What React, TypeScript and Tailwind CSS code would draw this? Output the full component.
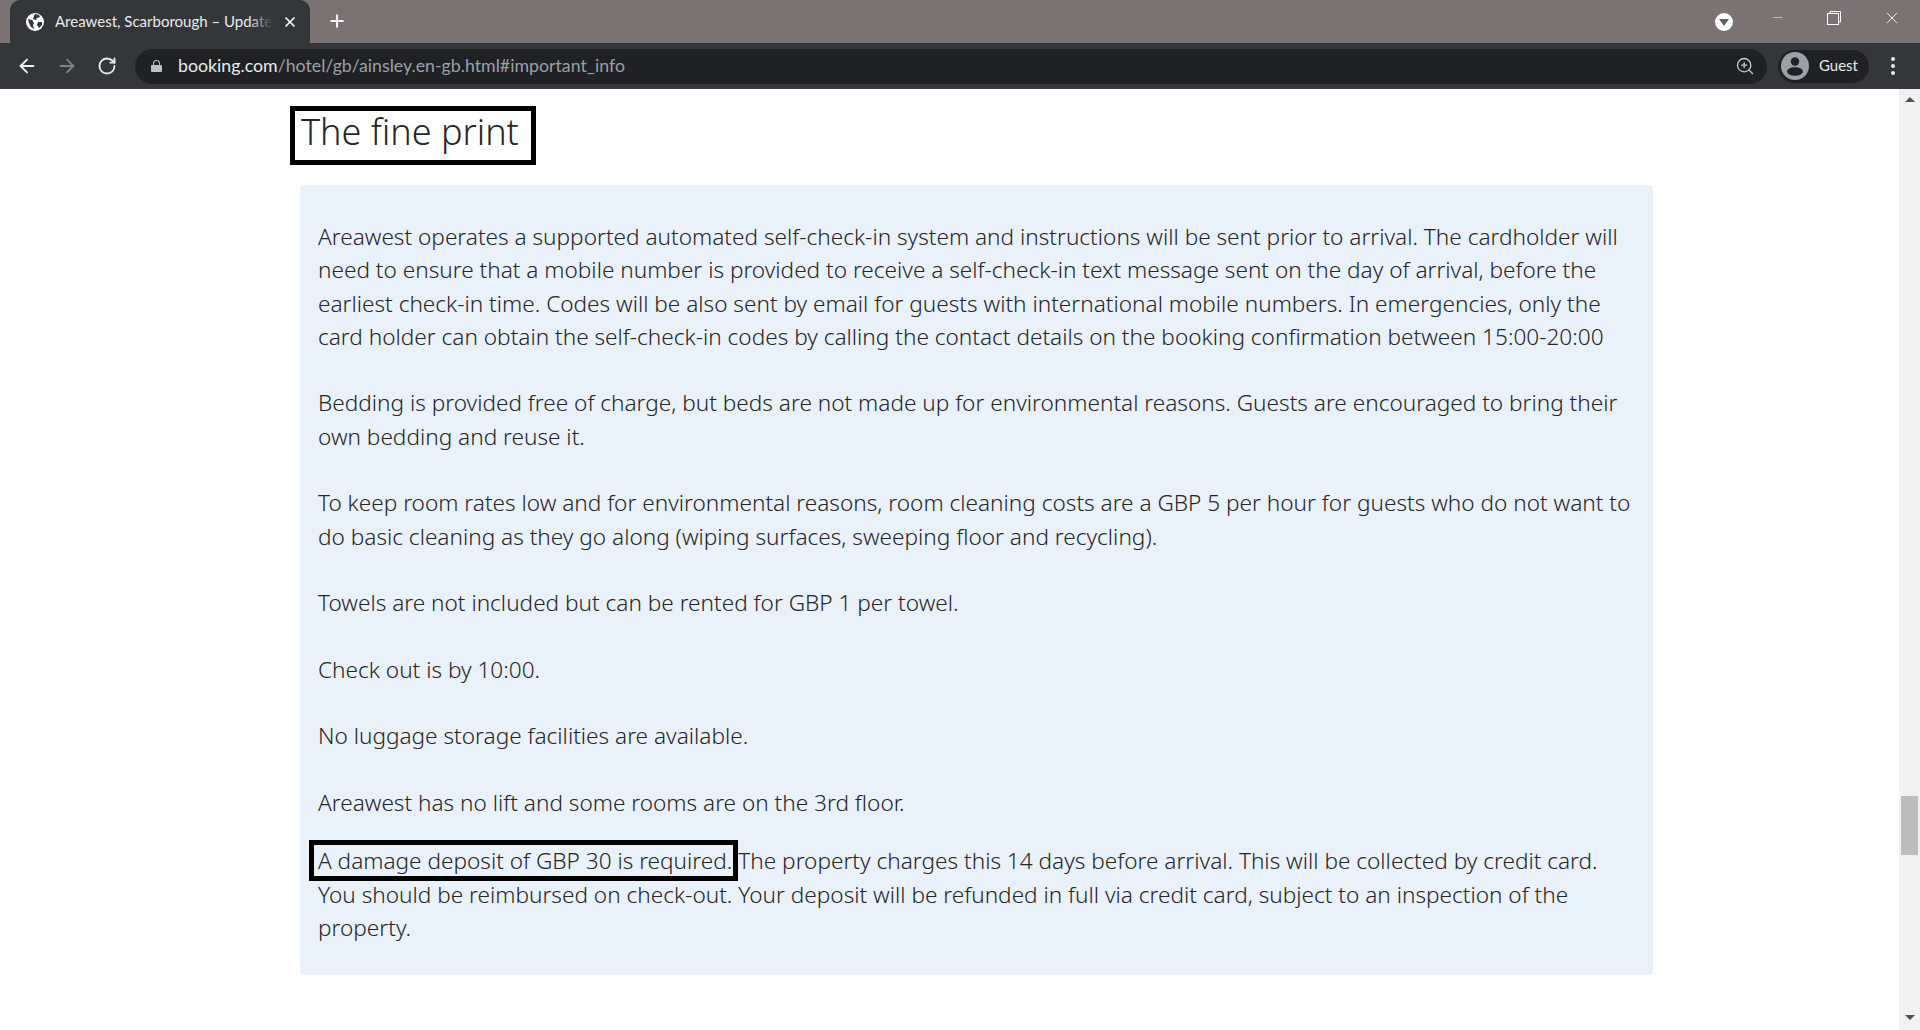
import React from 'react';
import { ArrowLeft, ArrowRight, RotateCw, Plus, X, ZoomIn, Minus } from 'lucide-react';

const GlobeIcon = () => (
  <svg width="18" height="18" viewBox="0 0 18 18" className="shrink-0">
    <circle cx="9" cy="9" r="9" fill="#ffffff" />
    <path d="M2 6l4 1 2 3-1 2 1 4-3-2-2-4zM9 1l4 1 1 2-3 1-1 2-3-1 1-3zM12 9l4 0 0 3-3 3-2-3z" fill="#35363a" />
  </svg>
);

const Avatar = () => (
  <svg width="28" height="28" viewBox="0 0 28 28" className="shrink-0">
    <circle cx="14" cy="14" r="14" fill="#9aa0a6" />
    <circle cx="14" cy="9.5" r="4.2" fill="#202124" />
    <ellipse cx="14" cy="19.5" rx="8" ry="4.2" fill="#202124" />
  </svg>
);

const RestoreIcon = () => (
  <svg width="14" height="14" viewBox="0 0 14 14" fill="none" stroke="#ffffff" strokeWidth="1">
    <rect x="0.5" y="2.5" width="11" height="11" />
    <path d="M3 2.5V0.5H13.5V11H11.5" />
  </svg>
);

const TabStrip = () => (
  <div className="flex h-[43px] shrink-0 items-end bg-[#7a7273] pl-[10px]">
    <div className="flex h-[43px] w-[300px] items-center rounded-t-[10px] bg-[#35363a] pl-[16px] pr-[12px]">
      <GlobeIcon />
      <div className="relative ml-[11px] w-[218px] overflow-hidden whitespace-nowrap font-['Lato',sans-serif] text-[15px] text-[#e8eaed]">
        Areawest, Scarborough – Update
        <div className="absolute inset-y-0 right-0 w-[24px] bg-gradient-to-r from-transparent to-[#35363a]" />
      </div>
      <X className="ml-auto text-white" size={16} strokeWidth={2.5} />
    </div>
    <Plus className="mb-[12px] ml-[17px] text-[#f1f3f4]" size={20} strokeWidth={2.5} />
    <div className="mb-[6px] ml-auto flex h-[31px] items-center">
      <div className="flex h-[18px] w-[18px] items-center justify-center rounded-full bg-white">
        <div className="mt-[2px] h-0 w-0 border-x-[5px] border-t-[7px] border-x-transparent border-t-[#5f6368]" />
      </div>
      <Minus className="-mt-[8px] ml-[37px] text-[#e8e6e6]" size={15} strokeWidth={1} />
      <div className="-mt-[8px] ml-[42px]">
        <RestoreIcon />
      </div>
      <X className="-mt-[8px] ml-[41px] mr-[18px] text-[#ffffff]" size={20} strokeWidth={1} />
    </div>
  </div>
);

const Toolbar = () => (
  <div className="flex h-[46px] shrink-0 items-center bg-[#35363a] pl-[16px]">
    <ArrowLeft className="text-[#f1f3f4]" size={22} strokeWidth={2} />
    <ArrowRight className="ml-[18px] text-[#7f8184]" size={22} strokeWidth={2} />
    <RotateCw className="ml-[19px] text-[#e8eaed]" size={20} strokeWidth={2.2} />
    <div className="ml-[18px] flex h-[35px] w-[1632px] items-center rounded-full bg-[#202124] pl-[16px] pr-[12px]">
      <div className="flex h-[12px] w-[11px] flex-col items-center justify-end">
        <div className="h-[5px] w-[7px] rounded-t-full border-x-[1.5px] border-t-[1.5px] border-[#bdc1c6]" />
        <div className="h-[8px] w-[11px] rounded-[1px] bg-[#bdc1c6]" />
      </div>
      <span className="-mt-[2px] ml-[16px] font-['Lato',sans-serif] text-[17.75px] text-[#e8eaed]">
        booking.com<span className="text-[#9aa0a6]">/hotel/gb/ainsley.en-gb.html#important_info</span>
      </span>
      <ZoomIn className="ml-auto text-[#c8cbd0]" size={20} strokeWidth={1.6} />
    </div>
    <div className="ml-[11px] flex h-[33px] w-[91px] items-center rounded-full bg-[#202124] pl-[3px]">
      <Avatar />
      <span className="-mt-[2px] ml-[10px] font-['Lato',sans-serif] text-[15px] text-[#e8eaed]">Guest</span>
    </div>
    <div className="ml-[22px] flex flex-col gap-[3px]">
      <div className="h-[4px] w-[4px] rounded-full bg-[#e8eaed]" />
      <div className="h-[4px] w-[4px] rounded-full bg-[#e8eaed]" />
      <div className="h-[4px] w-[4px] rounded-full bg-[#e8eaed]" />
    </div>
  </div>
);

const Scrollbar = () => (
  <div className="flex w-[21px] shrink-0 flex-col items-center justify-between bg-[#f1f1f1] pb-[10px] pt-[8px]">
    <div className="h-0 w-0 border-x-[5px] border-b-[5px] border-x-transparent border-b-[#505050]" />
    <div className="mb-[160px] mt-auto h-[59px] w-[17px] bg-[#bcbcbc]" />
    <div className="h-0 w-0 border-x-[5px] border-t-[5px] border-x-transparent border-t-[#505050]" />
  </div>
);

export default function App() {
  return (
    <div className="flex h-screen w-full flex-col overflow-hidden bg-white font-['Noto_Sans',sans-serif]">
      <TabStrip />
      <Toolbar />
      <div className="flex min-h-0 flex-1">
        <main className="flex-1 pl-[290px] pt-[17px] text-[#262626]">
          <h2 className="flex h-[59px] w-[246px] items-center border-[5px] border-black pb-[7px] pl-[6px] text-[36px] font-light leading-none text-[#262626]">
            The fine print
          </h2>
          <div className="ml-[10px] mt-[20px] h-[790px] w-[1353px] whitespace-nowrap rounded-[4px] bg-[#e9f1fb] pl-[18px] pt-[35px] text-[22.6px] font-light leading-[33.3px]">
            <p>
              Areawest operates a supported automated self-check-in system and instructions will be sent prior to arrival. The cardholder will
              <br />
              need to ensure that a mobile number is provided to receive a self-check-in text message sent on the day of arrival, before the
              <br />
              earliest check-in time. Codes will be also sent by email for guests with international mobile numbers. In emergencies, only the
              <br />
              card holder can obtain the self-check-in codes by calling the contact details on the booking confirmation between 15:00-20:00
              <br />
              <br />
              Bedding is provided free of charge, but beds are not made up for environmental reasons. Guests are encouraged to bring their
              <br />
              own bedding and reuse it.
              <br />
              <br />
              To keep room rates low and for environmental reasons, room cleaning costs are a GBP 5 per hour for guests who do not want to
              <br />
              do basic cleaning as they go along (wiping surfaces, sweeping floor and recycling).
              <br />
              <br />
              Towels are not included but can be rented for GBP 1 per towel.
              <br />
              <br />
              Check out is by 10:00.
              <br />
              <br />
              No luggage storage facilities are available.
              <br />
              <br />
              Areawest has no lift and some rooms are on the 3rd floor.
            </p>
            <p className="mt-[25px]">
              <span className="-ml-[9px] border-[5px] border-black pl-[4px] pr-[1px]">A damage deposit of GBP 30 is required.</span>
              The property charges this 14 days before arrival. This will be collected by credit card.
              <br />
              You should be reimbursed on check-out. Your deposit will be refunded in full via credit card, subject to an inspection of the
              <br />
              property.
            </p>
          </div>
        </main>
        <Scrollbar />
      </div>
    </div>
  );
}
